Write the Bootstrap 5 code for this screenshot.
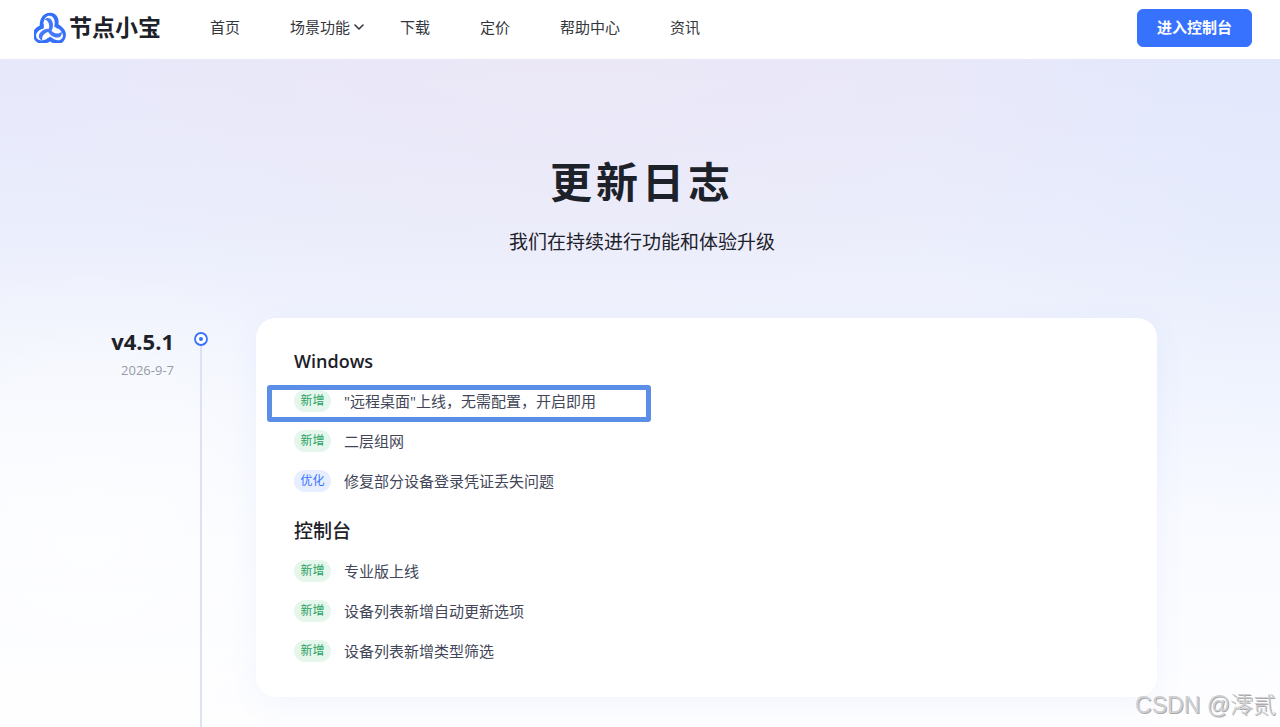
<!DOCTYPE html>
<html lang="zh-CN">
<head>
<meta charset="utf-8">
<meta name="viewport" content="width=device-width, initial-scale=1">
<title>更新日志 - 节点小宝</title>
<link href="https://cdn.jsdelivr.net/npm/bootstrap@5.3.0/dist/css/bootstrap.min.css" rel="stylesheet">
<style>
  body { font-family: "Open Sans", "Noto Sans CJK SC", sans-serif; font-size: 15px; color: #1d2129; }
  .site-bar { height: 59px; padding: 0 28px 4px 34px; font-family: "Noto Sans CJK SC", sans-serif; }
  .navbar-brand { width: 151px; gap: 3px; font-size: 23px; font-weight: 700; line-height: 30px; color: #1d2129; }
  .navbar-brand span { padding-bottom: 4px; }
  .site-bar .nav-link { padding: 0 25px 2px; line-height: 24px; color: #33363d; }
  .site-bar .has-menu { padding-right: 10px; }
  .has-menu svg { margin-left: 4px; margin-right: 1px; }
  .btn-console { --bs-btn-bg: #3772ff; --bs-btn-border-color: #3772ff; --bs-btn-color: #fff; --bs-btn-hover-bg: #2a63ee; --bs-btn-hover-color: #fff; width: 115px; height: 38px; padding: 0; border-radius: 6px; font-size: 15px; font-weight: 700; }
  .log-page {
    background:
      radial-gradient(ellipse 330px 300px at 90px 480px, rgba(255,255,255,.7), rgba(255,255,255,0)),
      radial-gradient(ellipse 620px 280px at 45% -20px, rgba(238,231,245,.7), rgba(238,231,245,0)),
      radial-gradient(ellipse 380px 440px at 100% 40px, rgba(222,231,253,.45), rgba(222,231,253,0)),
      linear-gradient(#e6e8fb 0, #ebeefc 180px, #f2f5fe 300px, #f8faff 450px, #fefeff 668px);
  }
  .hero { padding: 95px 0 61px; }
  .hero h1 { font-size: 42px; line-height: 56px; letter-spacing: 4px; font-weight: 700; margin: 0 0 18px 4px; }
  .hero p { font-size: 19px; line-height: 29px; margin: 0 0 0 4px; }
  .when { width: 174px; padding-top: 8px; }
  .when h2 { font-size: 22px; line-height: 30px; font-weight: 700; margin: 0 0 4px; }
  .when time { font-size: 13px; line-height: 20px; color: #989ba6; }
  .rail { width: 54px; padding-top: 14px; }
  .rail-line { width: 2px; background: #dde2f2; }
  .log-main { margin: 0 123px 30px 28px; }
  .log-card { border: 0; border-radius: 20px; padding: 29px 38px 34px; box-shadow: 0 8px 32px rgba(60,110,240,.06); }
  .log-card h3 { font-size: 18px; line-height: 28px; font-weight: 600; margin: 0 0 14px; }
  .log-card h3.cn { font-weight: 500; font-size: 19px; }
  .log-card ul { gap: 16px; color: #424658; }
  .log-card ul + h3 { margin-top: 24px; }
  .log-card li { gap: 13px; line-height: 24px; }
  .tag { width: 37px; height: 22px; line-height: 22px; border-radius: 11px; font-size: 12px; font-weight: 400; padding: 0; }
  .tag-new { background: #e5f7ec; color: #2ba165; }
  .tag-opt { background: #e7eeff; color: #3772ff; }
  .marked { left: -27px; top: -4px; width: 384px; height: 37px; border: 5px solid #5b8ee6; border-radius: 3px; pointer-events: none; }
  .watermark { right: 4px; bottom: 6px; font: 300 23px/32px "Liberation Sans", "Noto Sans CJK SC", sans-serif; color: #d0d0d2; text-shadow: 1px 1px 0 #aaaaac; pointer-events: none; }
</style>
</head>
<body>
<div class="min-vh-100 d-flex flex-column position-relative">
  <header class="site-bar bg-white d-flex align-items-center">
    <a class="navbar-brand d-flex align-items-center m-0 p-0" href="#">
      <svg width="32" height="31" viewBox="0 0 32 31" aria-hidden="true">
        <defs>
          <g id="blade">
            <path d="M6 17.500C4.500 7 9 .8 16 .8C23.500 .8 26.500 8 23.500 17C22.500 15.800 21.500 15.200 20.500 14.800C21.500 9 20 4 15.500 3.700C11.500 3.500 8.500 9 9.500 16.200Z" fill="#3470fb"/>
            <path d="M10.300 7.500C14.500 3.500 19.500 7.500 19 14C18.800 17 17.500 19.500 15.300 21C14.700 20 14.500 19 14.600 18C15.800 14 15.500 8.500 10.300 7.500Z" fill="#4479fc"/>
          </g>
        </defs>
        <use href="#blade"/>
        <use href="#blade" transform="rotate(120 15.500 18.500)"/>
        <use href="#blade" transform="rotate(240 15.500 18.500)"/>
      </svg>
      <span>节点小宝</span>
    </a>
    <nav class="nav flex-nowrap" aria-label="主导航">
      <a class="nav-link" href="#">首页</a>
      <a class="nav-link has-menu d-flex align-items-center" href="#">场景功能<svg width="10" height="6" viewBox="0 0 10 6" fill="none" stroke="#33363d" stroke-width="1.600" stroke-linecap="round" stroke-linejoin="round" aria-hidden="true"><path d="M1 1l4 4 4-4"/></svg></a>
      <a class="nav-link" href="#">下载</a>
      <a class="nav-link" href="#">定价</a>
      <a class="nav-link" href="#">帮助中心</a>
      <a class="nav-link" href="#">资讯</a>
    </nav>
    <button class="btn btn-console ms-auto" type="button">进入控制台</button>
  </header>

  <main class="log-page flex-grow-1 d-flex flex-column">
    <section class="hero text-center">
      <h1>更新日志</h1>
      <p>我们在持续进行功能和体验升级</p>
    </section>
    <article class="flex-grow-1 d-flex">
      <div class="when text-end flex-shrink-0">
        <h2>v4.5.1</h2>
        <time class="d-block" datetime="2026-09-07">2026-9-7</time>
      </div>
      <div class="rail d-flex flex-column align-items-center flex-shrink-0">
        <svg class="flex-shrink-0" width="14" height="14" viewBox="0 0 14 14" aria-hidden="true"><circle cx="7" cy="7" r="6" fill="#fff" stroke="#3772ff" stroke-width="1.800"/><circle cx="7" cy="7" r="2" fill="#3772ff"/></svg>
        <div class="rail-line flex-grow-1"></div>
      </div>
      <div class="log-main flex-grow-1">
        <div class="card log-card">
          <h3>Windows</h3>
          <ul class="list-unstyled d-flex flex-column m-0">
            <li class="d-flex align-items-center position-relative"><span class="badge tag tag-new">新增</span>"远程桌面"上线，无需配置，开启即用<span class="marked position-absolute"></span></li>
            <li class="d-flex align-items-center"><span class="badge tag tag-new">新增</span>二层组网</li>
            <li class="d-flex align-items-center"><span class="badge tag tag-opt">优化</span>修复部分设备登录凭证丢失问题</li>
          </ul>
          <h3 class="cn">控制台</h3>
          <ul class="list-unstyled d-flex flex-column m-0">
            <li class="d-flex align-items-center"><span class="badge tag tag-new">新增</span>专业版上线</li>
            <li class="d-flex align-items-center"><span class="badge tag tag-new">新增</span>设备列表新增自动更新选项</li>
            <li class="d-flex align-items-center"><span class="badge tag tag-new">新增</span>设备列表新增类型筛选</li>
          </ul>
        </div>
      </div>
    </article>
  </main>
  <div class="watermark position-absolute">CSDN @澪贰</div>
</div>
<script src="https://cdn.jsdelivr.net/npm/bootstrap@5.3.0/dist/js/bootstrap.bundle.min.js"></script>
</body>
</html>
